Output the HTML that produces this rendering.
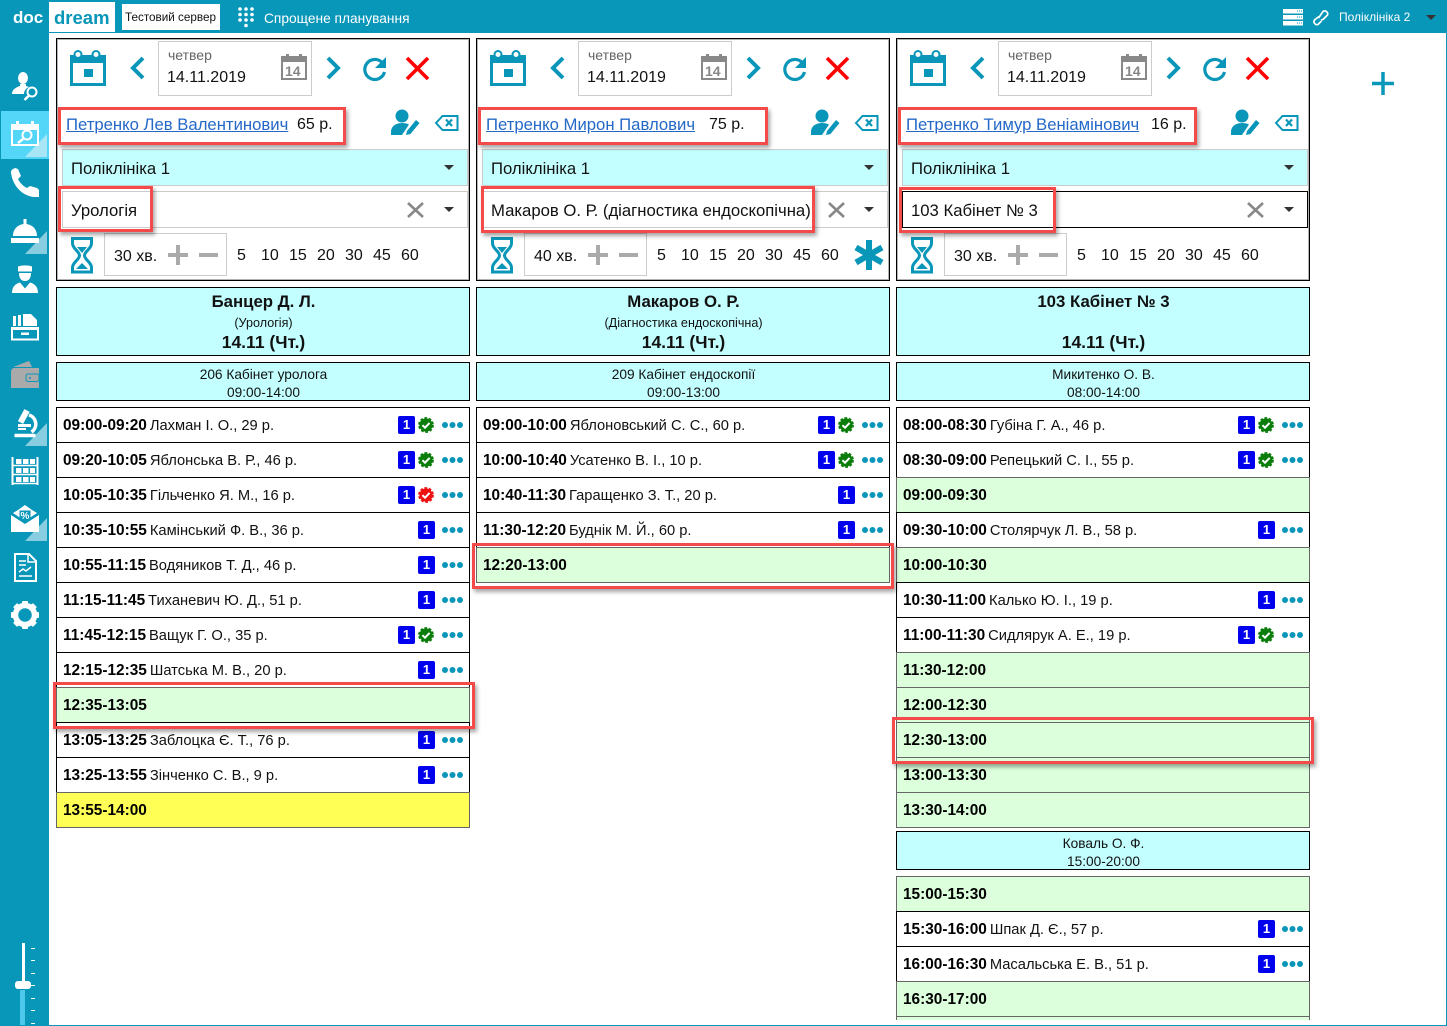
<!DOCTYPE html>
<html><head><meta charset="utf-8"><style>
*{box-sizing:border-box}
html,body{margin:0;padding:0;width:1447px;height:1026px;overflow:hidden;background:#fff;font-family:"Liberation Sans","Noto Sans CJK SC",sans-serif;color:#111}
#app{position:relative;width:1447px;height:1026px;overflow:hidden}
.a{position:absolute;white-space:nowrap}
.col{position:absolute;top:0;width:414px;height:1020px;overflow:hidden}
.top{position:absolute;left:0;top:38px;width:414px;height:243px;border:1px solid #000;box-shadow:inset 0 0 0 1px rgba(0,0,0,.3)}
.t{position:absolute;white-space:nowrap;line-height:20px;height:20px;font-size:16px}
.u{font-size:16.700px}
.dd{position:absolute;left:6px;width:406px;height:37px;border:1px solid #ccc}
.hd{position:absolute;left:0;width:414px;background:#c4ffff;border:1px solid #000;text-align:center}
.hd div{position:absolute;left:1px;right:0;white-space:nowrap}
.hd .n{top:4px;font:700 16.800px/20px "Liberation Sans",sans-serif}
.hd .s{top:27px;font-size:12.600px;line-height:16px}
.hd .d{top:44px;font:700 17.500px/20px "Liberation Sans",sans-serif}
.sb{font-size:13.700px}
.sb .l1{top:3px;line-height:18px}
.sb .l2{top:21px;line-height:18px}
.r{position:absolute;left:0;width:414px;height:36px;border:1px solid #000;background:#fff;font-size:14.700px;line-height:35px;padding-left:6px;white-space:nowrap}
.r b{font-weight:700;font-size:15.400px;color:#000;margin-right:3px}
.g{background:#dcffdc;border-color:#666}
.y{background:#ffff55;border-color:#666}
.bd{position:absolute;left:361px;top:8px;width:17px;height:18px;background:#0000ee;border-radius:2px;color:#fff;font:700 13px/18px "Liberation Sans",sans-serif;text-align:center}
.c .bd{left:341px}
.ck{position:absolute;left:361px;top:9px;width:16px;height:16px}
.dt{position:absolute;left:385px;top:14px;width:6px;height:6px;border-radius:50%;background:#0a96b9;box-shadow:7.500px 0 #0a96b9,15px 0 #0a96b9}
.hl{position:absolute;border:3px solid #f44a4a;box-shadow:2px 3px 4px rgba(0,0,0,.35)}
svg{position:absolute;overflow:visible}
</style></head><body><div id="app">
<svg width="0" height="0"><defs>
<g id="ok"><circle cx="8" cy="8" r="6.600" fill="#0a7d0a" stroke="#0a7d0a" stroke-width="2.600" stroke-dasharray="2.600 1.600"/><path d="M4.400 8.200l2.600 2.500 4.600-4.800" fill="none" stroke="#fff" stroke-width="2"/></g>
<g id="no"><circle cx="8" cy="8" r="6.600" fill="#ee1111" stroke="#ee1111" stroke-width="2.600" stroke-dasharray="2.600 1.600"/><path d="M4.400 8.200l2.600 2.500 4.600-4.800" fill="none" stroke="#fff" stroke-width="2"/></g>
<g id="topicons">
<path d="M15.500 20h33v27.500h-33z" fill="none" stroke="#0a96b9" stroke-width="3"/><path d="M14 18h36v8H14z" fill="#0a96b9"/><circle cx="22" cy="17.500" r="3.500" fill="#fff" stroke="#0a96b9" stroke-width="2"/><circle cx="40" cy="17.500" r="3.500" fill="#fff" stroke="#0a96b9" stroke-width="2"/><rect x="28" y="32" width="9" height="8" fill="#0a96b9"/>
<path d="M87 21L77 31 87 41" fill="none" stroke="#0a96b9" stroke-width="4"/>
<path d="M272 21L282 31 272 41" fill="none" stroke="#0a96b9" stroke-width="4"/>
<path d="M326 25.500a10 10 0 1 0 2.500 9.500" fill="none" stroke="#0a96b9" stroke-width="3.200"/><path d="M330 20v11h-11z" fill="#0a96b9"/>
<path d="M351 21l21 21M372 21l-21 21" stroke="#ff0000" stroke-width="3.600"/>
<rect x="226" y="20" width="24" height="22" fill="#fff" stroke="#888" stroke-width="2"/><rect x="225" y="19" width="26" height="6" fill="#888"/><rect x="230" y="17" width="3" height="5" fill="#888"/><rect x="243" y="17" width="3" height="5" fill="#888"/>
</g>
<g id="pat">
<circle cx="346" cy="116" r="6.500" fill="#0a96b9"/><path d="M335 135v-3c0-6 5-9 11-9 3 0 5 .6 7 1.500l-7 10.500z" fill="#0a96b9"/><path d="M350 135l1-4 9-11 3.500 3-9 11z" fill="#0a96b9"/>
<path d="M380 123l6.500-7h15v14h-15z" fill="none" stroke="#0a96b9" stroke-width="2"/><path d="M390 119.500l6 6.500M396 119.500l-6 6.500" stroke="#0a96b9" stroke-width="2.200"/>
</g>
<g id="hg"><path d="M16.500 238.500h19v5c0 5-7 8-7 12s7 7 7 12v4.500h-19v-4.500c0-5 7-8 7-12s-7-7-7-12z" fill="none" stroke="#0a96b9" stroke-width="3"/><path d="M21 247h10l-5 6zM20 269l6-6 6 6z" fill="#0a96b9"/></g>
<g id="pm"><path d="M112 255h20M122 245v20M143 255h19" stroke="#aaa" stroke-width="4"/></g>
</defs></svg>

<!-- chrome -->
<div class="a" style="left:0;top:0;width:1447px;height:33px;background:#0896b9"></div>
<div class="a" style="left:0;top:0;width:49px;height:1026px;background:#0896b9"></div>
<div class="a" style="left:1446px;top:0;width:1px;height:1026px;background:#0896b9"></div>
<div class="a" style="left:0;top:1025px;width:1447px;height:1px;background:#0896b9"></div>
<div class="a" style="left:13px;top:7px;font:700 17px/22px 'Liberation Sans',sans-serif;color:#fff">doc</div>
<div class="a" style="left:49px;top:2px;width:66px;height:30px;background:#fff"></div>
<div class="a" style="left:54px;top:7px;font:700 18.500px/22px 'Liberation Sans',sans-serif;color:#0896b9">dream</div>
<div class="a" style="left:122px;top:4px;width:98px;height:26px;background:#fff"></div>
<div class="a" style="left:125px;top:9px;font-size:11.700px;line-height:17px;color:#111">Тестовий сервер</div>
<svg style="left:238px;top:7px" width="16" height="21" fill="#fff"><circle cx="2" cy="2" r="1.800"/><circle cx="8" cy="2" r="1.800"/><circle cx="14" cy="2" r="1.800"/><circle cx="2" cy="7.500" r="1.800"/><circle cx="8" cy="7.500" r="1.800"/><circle cx="14" cy="7.500" r="1.800"/><circle cx="2" cy="13" r="1.800"/><circle cx="8" cy="13" r="1.800"/><circle cx="14" cy="13" r="1.800"/><circle cx="8" cy="18.500" r="1.800"/></svg>
<div class="a" style="left:264px;top:10px;font-size:13.750px;line-height:17px;color:#fff">Спрощене планування</div>
<svg style="left:1283px;top:9px" width="20" height="17"><rect width="20" height="4.500" fill="#fff"/><rect y="6" width="20" height="4.500" fill="#fff"/><rect y="12" width="20" height="4.500" fill="#fff"/><path d="M14 2h5M14 8h5M14 14h5" stroke="#0896b9" stroke-width="1" stroke-dasharray="1 1"/></svg>
<svg style="left:1312px;top:9px" width="17" height="17" fill="none" stroke="#fff" stroke-width="1.700"><path d="M7 7.500L2.500 11a3 3 0 0 0 3.500 4.500L9.500 12"/><path d="M6.500 9L11 2.500a3 3 0 0 1 4.500 3.500L11 10.500 9 11"/></svg>
<div class="a" style="left:1339px;top:9px;font-size:12px;line-height:17px;color:#fff">Поліклініка 2</div>
<svg style="left:1426px;top:15px" width="10" height="6"><path d="M0 0h10L5 5z" fill="#333"/></svg>
<svg style="left:1372px;top:72px" width="23" height="23"><path d="M0 11.500h22M11 0v23" stroke="#0896b9" stroke-width="3.500"/></svg>

<!-- sidebar -->
<div class="a" style="left:1px;top:111px;width:48px;height:48px;background:#54d6f9"></div>
<svg style="left:0;top:0" width="49" height="1026">
<path d="M47 134v23H25z" fill="#a8e6f5"/><path d="M47 231v23H25z" fill="#88cde0"/><path d="M47 423v23H25z" fill="#88cde0"/><path d="M47 518v23H25z" fill="#88cde0"/>
<g fill="#fff">
<ellipse cx="23" cy="78" rx="5" ry="6"/><path d="M12 94c0-5 5-7 8-8v-2h6v2l3 1c-3 1-5 4-5 7H12z"/>
<circle cx="32" cy="92" r="4.500" fill="none" stroke="#fff" stroke-width="2"/><path d="M28.500 96l-4 4" stroke="#fff" stroke-width="2.500"/>
<path d="M12 125h26v20H12z" fill="none" stroke="#fff" stroke-width="2"/><path d="M12 124h26v6H12z"/><rect x="16" y="121" width="3" height="6"/><rect x="31" y="121" width="3" height="6"/><circle cx="27" cy="135" r="4.500" fill="none" stroke="#fff" stroke-width="2"/><path d="M23 139l-5 4" stroke="#fff" stroke-width="2.500"/>
<path d="M11 172c0-2 2-3 4-4l3 1 3 7-3 3c2 4 5 7 9 9l3-2 7 2 2 2v7h-5c-12-1-22-12-23-25z"/>
<path d="M11 238h28v5H11zM13 236c0-7 5-12 12-12s12 5 12 12z"/><rect x="23.500" y="219" width="3" height="5"/>
<path d="M18 266.500c4-1.500 10-1.500 14 0v5H18zM19 273h12c0 5-2 8-6 8s-6-3-6-8zM12 293c0-6 3-9 8-10.500l5 6 5-6c5 1.500 8 4.500 8 10.500z"/>
<path d="M12 328h26v11.500H12z" fill="none" stroke="#fff" stroke-width="2"/><rect x="11" y="327" width="28" height="3"/><path d="M13 316h3v10h-3zM18 315h3v11h-3zM23 314h8l6 6v6H23z"/><rect x="21" y="332.500" width="8" height="2.500"/>
<path d="M14.500 435.500h21" stroke="#fff" stroke-width="3.500"/><path d="M29 415a9.500 9.500 0 0 1 2.500 17" fill="none" stroke="#fff" stroke-width="3.500"/><path d="M27 410.500l-6.500 12" stroke="#fff" stroke-width="6"/><rect x="18" y="424" width="13" height="3"/><rect x="18" y="428" width="8" height="2"/>
<path d="M12.500 457v28M37.500 457v28" stroke="#fff" stroke-width="2" fill="none"/><path d="M12 465.500h26M12 474.500h26M12 483.500h26" stroke="#fff" stroke-width="1.500"/><rect x="16" y="459" width="5.500" height="5"/><rect x="23" y="459" width="5.500" height="5"/><rect x="30" y="459" width="5" height="5"/><rect x="16" y="468" width="5.500" height="5"/><rect x="23" y="468" width="5.500" height="5"/><rect x="30" y="468" width="5" height="5"/><rect x="16" y="477" width="5.500" height="5"/><rect x="23" y="477" width="5.500" height="5"/><rect x="30" y="477" width="5" height="5"/>
<path d="M11 515l14 9 14-9v17H11z"/><path d="M13 513l5-3 7-5 7 5 5 3-12 8z"/><path d="M19.500 510.500h11v9l-5.500 3-5.500-3z" fill="#0896b9"/>
<text x="25" y="519" text-anchor="middle" font-family="Liberation Sans" font-weight="700" font-size="10" fill="#fff">%</text>
<path d="M15 554h14l7 7v20H15z" fill="none" stroke="#fff" stroke-width="2"/><path d="M28 554v8h8M19 561h7M19 565h7M19 576h13M19 572l4-3 3 2 5-4" fill="none" stroke="#fff" stroke-width="1.500"/>
</g>
<path d="M11 372c0-2 1-4 3-4h25v20H11z" fill="#aaa"/><path d="M13 367l16-6 3 6z" fill="#aaa"/><rect x="26" y="374" width="13" height="7.500" rx="2" fill="#aaa" stroke="#0896b9" stroke-width="1"/><circle cx="30" cy="378" r="1" fill="#0896b9"/>
<g fill="#fff"><circle cx="25" cy="615" r="9.500" fill="none" stroke="#fff" stroke-width="5.500"/>
<rect x="22" y="601" width="6" height="5" rx="1"/><rect x="22" y="601" width="6" height="5" rx="1" transform="rotate(45 25 615)"/><rect x="22" y="601" width="6" height="5" rx="1" transform="rotate(90 25 615)"/><rect x="22" y="601" width="6" height="5" rx="1" transform="rotate(135 25 615)"/><rect x="22" y="601" width="6" height="5" rx="1" transform="rotate(180 25 615)"/><rect x="22" y="601" width="6" height="5" rx="1" transform="rotate(225 25 615)"/><rect x="22" y="601" width="6" height="5" rx="1" transform="rotate(270 25 615)"/><rect x="22" y="601" width="6" height="5" rx="1" transform="rotate(315 25 615)"/></g>
<rect x="22" y="943" width="3" height="38" fill="#fff"/><rect x="20" y="990" width="5" height="35" fill="#4cc8ea"/><rect x="15" y="981" width="16" height="8" rx="3" fill="#fff"/>
<path d="M31 948.500h4M31 960.500h4M31 973.500h4M31 985.500h4M31 998.500h4M31 1010.500h4M31 1023.500h4" stroke="#fff" stroke-width="1"/>
</svg>

<!-- COLUMN 1 -->
<div class="col" style="left:56px">
<div class="top"></div>
<svg style="left:0;top:37px" width="414" height="60"><use href="#topicons"/></svg>
<div class="a" style="left:102px;top:41px;width:154px;height:55px;border:1px solid #ccc"></div>
<div class="t" style="left:112px;top:45px;font-size:14px;color:#666">четвер</div>
<div class="t" style="left:111px;top:68px">14.11.2019</div>
<div class="t" style="left:229px;top:61px;font:700 14px/20px 'Liberation Sans',sans-serif;color:#888">14</div>
<svg style="left:0;top:0" width="414" height="280"><use href="#pat"/><use href="#hg"/><use href="#pm"/></svg>
<div class="t u" style="left:10px;top:115px;color:#2468c8;text-decoration:underline">Петренко Лев Валентинович</div>
<div class="t" style="left:241px;top:115px">65 р.</div>
<div class="dd" style="top:149px;background:#c4ffff"></div>
<div class="t u" style="left:15px;top:159px">Поліклініка 1</div>
<svg style="left:388px;top:165px" width="10" height="6"><path d="M0 0h10L5 5z" fill="#333"/></svg>
<div class="dd" style="top:191px;background:#fff"></div>
<div class="t u" style="left:15px;top:201px">Урологія</div>
<svg style="left:352px;top:203px" width="15" height="15"><path d="M0 0l15 14M15 0L0 14" stroke="#888" stroke-width="2.600"/></svg>
<svg style="left:388px;top:207px" width="10" height="6"><path d="M0 0h10L5 5z" fill="#333"/></svg>
<div class="a" style="left:48px;top:233px;width:123px;height:43px;border:1px solid #ccc"></div>
<div class="t" style="left:58px;top:247px">30 хв.</div>
<div class="t" style="left:181px;top:246px">5</div><div class="t" style="left:205px;top:246px">10</div><div class="t" style="left:233px;top:246px">15</div><div class="t" style="left:261px;top:246px">20</div><div class="t" style="left:289px;top:246px">30</div><div class="t" style="left:317px;top:246px">45</div><div class="t" style="left:345px;top:246px">60</div>

<div class="hd" style="top:287px;height:69px"><div class="n">Банцер Д. Л.</div><div class="s">(Урологія)</div><div class="d">14.11 (Чт.)</div></div>
<div class="hd sb" style="top:362px;height:39px"><div class="l1">206 Кабінет уролога</div><div class="l2">09:00-14:00</div></div>

<div class="r c" style="top:407px"><b>09:00-09:20</b>Лахман І. О., 29 р.<i class="bd">1</i><svg class="ck" viewBox="0 0 16 16"><use href="#ok"/></svg><i class="dt"></i></div>
<div class="r c" style="top:442px"><b>09:20-10:05</b>Яблонська В. Р., 46 р.<i class="bd">1</i><svg class="ck" viewBox="0 0 16 16"><use href="#ok"/></svg><i class="dt"></i></div>
<div class="r c" style="top:477px"><b>10:05-10:35</b>Гільченко Я. М., 16 р.<i class="bd">1</i><svg class="ck" viewBox="0 0 16 16"><use href="#no"/></svg><i class="dt"></i></div>
<div class="r" style="top:512px"><b>10:35-10:55</b>Камінський Ф. В., 36 р.<i class="bd">1</i><i class="dt"></i></div>
<div class="r" style="top:547px"><b>10:55-11:15</b>Водяников Т. Д., 46 р.<i class="bd">1</i><i class="dt"></i></div>
<div class="r" style="top:582px"><b>11:15-11:45</b>Тиханевич Ю. Д., 51 р.<i class="bd">1</i><i class="dt"></i></div>
<div class="r c" style="top:617px"><b>11:45-12:15</b>Ващук Г. О., 35 р.<i class="bd">1</i><svg class="ck" viewBox="0 0 16 16"><use href="#ok"/></svg><i class="dt"></i></div>
<div class="r" style="top:652px"><b>12:15-12:35</b>Шатська М. В., 20 р.<i class="bd">1</i><i class="dt"></i></div>
<div class="r g" style="top:687px"><b>12:35-13:05</b></div>
<div class="r" style="top:722px"><b>13:05-13:25</b>Заблоцка Є. Т., 76 р.<i class="bd">1</i><i class="dt"></i></div>
<div class="r" style="top:757px"><b>13:25-13:55</b>Зінченко С. В., 9 р.<i class="bd">1</i><i class="dt"></i></div>
<div class="r y" style="top:792px"><b>13:55-14:00</b></div>
</div>

<!-- COLUMN 2 -->
<div class="col" style="left:476px">
<div class="top"></div>
<svg style="left:0;top:37px" width="414" height="60"><use href="#topicons"/></svg>
<div class="a" style="left:102px;top:41px;width:154px;height:55px;border:1px solid #ccc"></div>
<div class="t" style="left:112px;top:45px;font-size:14px;color:#666">четвер</div>
<div class="t" style="left:111px;top:68px">14.11.2019</div>
<div class="t" style="left:229px;top:61px;font:700 14px/20px 'Liberation Sans',sans-serif;color:#888">14</div>
<svg style="left:0;top:0" width="414" height="280"><use href="#pat"/><use href="#hg"/><use href="#pm"/></svg>
<div class="t u" style="left:10px;top:115px;color:#2468c8;text-decoration:underline">Петренко Мирон Павлович</div>
<div class="t" style="left:233px;top:115px">75 р.</div>
<div class="dd" style="top:149px;background:#c4ffff"></div>
<div class="t u" style="left:15px;top:159px">Поліклініка 1</div>
<svg style="left:388px;top:165px" width="10" height="6"><path d="M0 0h10L5 5z" fill="#333"/></svg>
<div class="dd" style="top:191px;background:#fff"></div>
<div class="t u" style="left:15px;top:201px">Макаров О. Р. (діагностика ендоскопічна)</div>
<svg style="left:353px;top:203px" width="15" height="15"><path d="M0 0l15 14M15 0L0 14" stroke="#888" stroke-width="2.600"/></svg>
<svg style="left:388px;top:207px" width="10" height="6"><path d="M0 0h10L5 5z" fill="#333"/></svg>
<div class="a" style="left:48px;top:233px;width:123px;height:43px;border:1px solid #ccc"></div>
<div class="t" style="left:58px;top:247px">40 хв.</div>
<div class="t" style="left:181px;top:246px">5</div><div class="t" style="left:205px;top:246px">10</div><div class="t" style="left:233px;top:246px">15</div><div class="t" style="left:261px;top:246px">20</div><div class="t" style="left:289px;top:246px">30</div><div class="t" style="left:317px;top:246px">45</div><div class="t" style="left:345px;top:246px">60</div>
<svg style="left:377px;top:239px" width="32" height="32"><path d="M16 1v30M3 8.500l26 15M29 8.500l-26 15" stroke="#0896b9" stroke-width="6"/></svg>

<div class="hd" style="top:287px;height:69px"><div class="n">Макаров О. Р.</div><div class="s">(Діагностика ендоскопічна)</div><div class="d">14.11 (Чт.)</div></div>
<div class="hd sb" style="top:362px;height:39px"><div class="l1">209 Кабінет ендоскопії</div><div class="l2">09:00-13:00</div></div>

<div class="r c" style="top:407px"><b>09:00-10:00</b>Яблоновський С. С., 60 р.<i class="bd">1</i><svg class="ck" viewBox="0 0 16 16"><use href="#ok"/></svg><i class="dt"></i></div>
<div class="r c" style="top:442px"><b>10:00-10:40</b>Усатенко В. І., 10 р.<i class="bd">1</i><svg class="ck" viewBox="0 0 16 16"><use href="#ok"/></svg><i class="dt"></i></div>
<div class="r" style="top:477px"><b>10:40-11:30</b>Гаращенко З. Т., 20 р.<i class="bd">1</i><i class="dt"></i></div>
<div class="r" style="top:512px"><b>11:30-12:20</b>Буднік М. Й., 60 р.<i class="bd">1</i><i class="dt"></i></div>
<div class="r g" style="top:547px"><b>12:20-13:00</b></div>
</div>

<!-- COLUMN 3 -->
<div class="col" style="left:896px">
<div class="top"></div>
<svg style="left:0;top:37px" width="414" height="60"><use href="#topicons"/></svg>
<div class="a" style="left:102px;top:41px;width:154px;height:55px;border:1px solid #ccc"></div>
<div class="t" style="left:112px;top:45px;font-size:14px;color:#666">четвер</div>
<div class="t" style="left:111px;top:68px">14.11.2019</div>
<div class="t" style="left:229px;top:61px;font:700 14px/20px 'Liberation Sans',sans-serif;color:#888">14</div>
<svg style="left:0;top:0" width="414" height="280"><use href="#pat"/><use href="#hg"/><use href="#pm"/></svg>
<div class="t u" style="left:10px;top:115px;color:#2468c8;text-decoration:underline">Петренко Тимур Веніамінович</div>
<div class="t" style="left:255px;top:115px">16 р.</div>
<div class="dd" style="top:149px;background:#c4ffff"></div>
<div class="t u" style="left:15px;top:159px">Поліклініка 1</div>
<svg style="left:388px;top:165px" width="10" height="6"><path d="M0 0h10L5 5z" fill="#333"/></svg>
<div class="dd" style="top:191px;background:#fff;border-color:#000"></div>
<div class="t u" style="left:15px;top:201px">103 Кабінет № 3</div>
<svg style="left:352px;top:203px" width="15" height="15"><path d="M0 0l15 14M15 0L0 14" stroke="#888" stroke-width="2.600"/></svg>
<svg style="left:388px;top:207px" width="10" height="6"><path d="M0 0h10L5 5z" fill="#333"/></svg>
<div class="a" style="left:48px;top:233px;width:123px;height:43px;border:1px solid #ccc"></div>
<div class="t" style="left:58px;top:247px">30 хв.</div>
<div class="t" style="left:181px;top:246px">5</div><div class="t" style="left:205px;top:246px">10</div><div class="t" style="left:233px;top:246px">15</div><div class="t" style="left:261px;top:246px">20</div><div class="t" style="left:289px;top:246px">30</div><div class="t" style="left:317px;top:246px">45</div><div class="t" style="left:345px;top:246px">60</div>

<div class="hd" style="top:287px;height:69px"><div class="n">103 Кабінет № 3</div><div class="d">14.11 (Чт.)</div></div>
<div class="hd sb" style="top:362px;height:39px"><div class="l1">Микитенко О. В.</div><div class="l2">08:00-14:00</div></div>

<div class="r c" style="top:407px"><b>08:00-08:30</b>Губіна Г. А., 46 р.<i class="bd">1</i><svg class="ck" viewBox="0 0 16 16"><use href="#ok"/></svg><i class="dt"></i></div>
<div class="r c" style="top:442px"><b>08:30-09:00</b>Репецький С. І., 55 р.<i class="bd">1</i><svg class="ck" viewBox="0 0 16 16"><use href="#ok"/></svg><i class="dt"></i></div>
<div class="r g" style="top:477px"><b>09:00-09:30</b></div>
<div class="r" style="top:512px"><b>09:30-10:00</b>Столярчук Л. В., 58 р.<i class="bd">1</i><i class="dt"></i></div>
<div class="r g" style="top:547px"><b>10:00-10:30</b></div>
<div class="r" style="top:582px"><b>10:30-11:00</b>Калько Ю. І., 19 р.<i class="bd">1</i><i class="dt"></i></div>
<div class="r c" style="top:617px"><b>11:00-11:30</b>Сидлярук А. Е., 19 р.<i class="bd">1</i><svg class="ck" viewBox="0 0 16 16"><use href="#ok"/></svg><i class="dt"></i></div>
<div class="r g" style="top:652px"><b>11:30-12:00</b></div>
<div class="r g" style="top:687px"><b>12:00-12:30</b></div>
<div class="r g" style="top:722px"><b>12:30-13:00</b></div>
<div class="r g" style="top:757px"><b>13:00-13:30</b></div>
<div class="r g" style="top:792px"><b>13:30-14:00</b></div>
<div class="hd sb" style="top:831px;height:39px"><div class="l1">Коваль О. Ф.</div><div class="l2">15:00-20:00</div></div>
<div class="r g" style="top:876px"><b>15:00-15:30</b></div>
<div class="r" style="top:911px"><b>15:30-16:00</b>Шпак Д. Є., 57 р.<i class="bd">1</i><i class="dt"></i></div>
<div class="r" style="top:946px"><b>16:00-16:30</b>Масальська Е. В., 51 р.<i class="bd">1</i><i class="dt"></i></div>
<div class="r g" style="top:981px"><b>16:30-17:00</b></div>
<div class="r g" style="top:1016px"></div>
</div>

<!-- highlight boxes -->
<div class="hl" style="left:58px;top:107px;width:288px;height:38px"></div>
<div class="hl" style="left:58px;top:186px;width:95px;height:46px"></div>
<div class="hl" style="left:478px;top:107px;width:290px;height:38px"></div>
<div class="hl" style="left:481px;top:186px;width:334px;height:47px"></div>
<div class="hl" style="left:898px;top:107px;width:299px;height:38px"></div>
<div class="hl" style="left:899px;top:187px;width:157px;height:46px"></div>
<div class="hl" style="left:53px;top:682px;width:422px;height:47px"></div>
<div class="hl" style="left:472px;top:543px;width:422px;height:46px"></div>
<div class="hl" style="left:892px;top:717px;width:422px;height:47px"></div>
</div></body></html>
